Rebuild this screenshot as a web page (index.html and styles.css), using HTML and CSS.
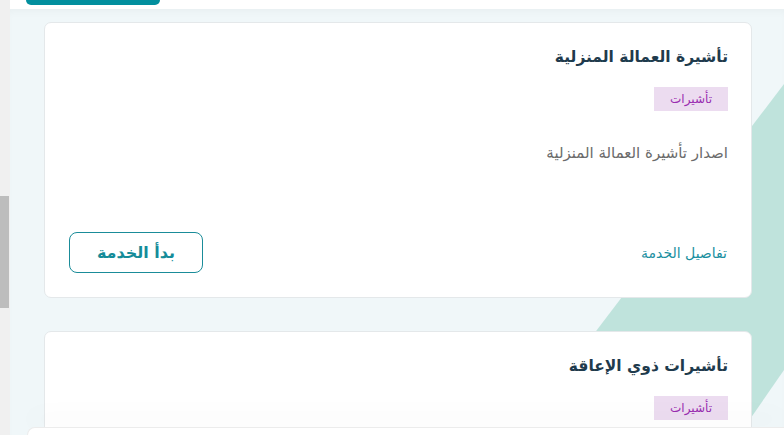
FILE: index.html
```html
<!DOCTYPE html>
<html lang="ar">
<head>
<meta charset="utf-8">
<link rel="stylesheet" href="styles.css">
</head>
<body>
<div class="scrollbar"><div class="thumb"></div></div>
<div class="page">
  <div class="header"><div class="header-btn"></div></div>
  <main class="main">
    <div class="stripe"></div>
    <div class="cards">
      <section class="card">
        <h2 class="title">تأشيرة العمالة المنزلية</h2>
        <span class="tag">تأشيرات</span>
        <p class="desc">اصدار تأشيرة العمالة المنزلية</p>
        <div class="actions">
          <a class="details">تفاصيل الخدمة</a>
          <button class="start">بدأ الخدمة</button>
        </div>
      </section>
      <section class="card">
        <h2 class="title">تأشيرات ذوي الإعاقة</h2>
        <span class="tag">تأشيرات</span>
      </section>
    </div>
    <div class="footer"></div>
  </main>
</div>
</body>
</html>
```
FILE: styles.css
```css
html, body {
  margin: 0;
  padding: 0;
}
body {
  width: 784px;
  height: 435px;
  overflow: hidden;
  display: flex;
  font-family: "DejaVu Sans", sans-serif;
  background: #ffffff;
}
.scrollbar {
  width: 10px;
  flex: none;
  background: #f0f0f0;
}
.thumb {
  margin-top: 196px;
  width: 9px;
  height: 112px;
  background: #bdbdbd;
}
.page {
  flex: 1;
  display: flex;
  flex-direction: column;
  min-width: 0;
}
.header {
  height: 9px;
  flex: none;
  background: #ffffff;
  padding-left: 16px;
}
.header-btn {
  width: 134px;
  height: 5px;
  background: #028f9e;
  border-radius: 0 0 7px 7px;
}
.main {
  flex: 1;
  position: relative;
  background: #f0f7f9;
  box-shadow: inset 0 6px 8px -4px rgba(0, 0, 0, 0.04);
  padding: 13px 32px 0 34px;
  overflow: hidden;
}
.stripe {
  position: absolute;
  inset: 0;
  background: #bfe3dc;
  clip-path: polygon(774px 75px, 774px 361px, 729px 426px, 507px 426px);
}
.cards {
  position: relative;
  display: flex;
  flex-direction: column;
  gap: 33px;
  direction: rtl;
}
.card {
  background: #ffffff;
  border: 1px solid #e4e8ea;
  border-radius: 7px;
  height: 274px;
  padding: 0 23px;
  display: flex;
  flex-direction: column;
  align-items: flex-start;
}
.title {
  margin: 20px 0 0;
  font-size: 15.5px;
  font-weight: bold;
  color: #1f3b4d;
  line-height: 28px;
}
.tag {
  margin-top: 16px;
  height: 24px;
  line-height: 24px;
  padding: 0 16px;
  background: #ecdcf0;
  color: #9a2db0;
  font-size: 12px;
}
.desc {
  margin: 31px 0 0;
  font-size: 15px;
  color: #6b6b6b;
  line-height: 22px;
}
.actions {
  margin-top: auto;
  margin-bottom: 24px;
  align-self: stretch;
  display: flex;
  justify-content: space-between;
  align-items: center;
}
.details {
  color: #1a8fa0;
  font-size: 14px;
  margin-right: 1px;
}
.start {
  width: 134px;
  height: 41px;
  border: 1px solid #1a8c99;
  border-radius: 8px;
  background: #ffffff;
  color: #158c99;
  font-family: inherit;
  font-size: 16px;
  font-weight: bold;
  margin-left: 1px;
}
.footer {
  position: absolute;
  left: 17px;
  right: 0;
  bottom: 0;
  height: 7px;
  background: #ffffff;
  border-top: 1px solid #ececec;
  border-left: 1px solid #ececec;
  border-radius: 8px 0 0 0;
  box-shadow: 0 -12px 24px rgba(0, 0, 0, 0.035);
}
```
